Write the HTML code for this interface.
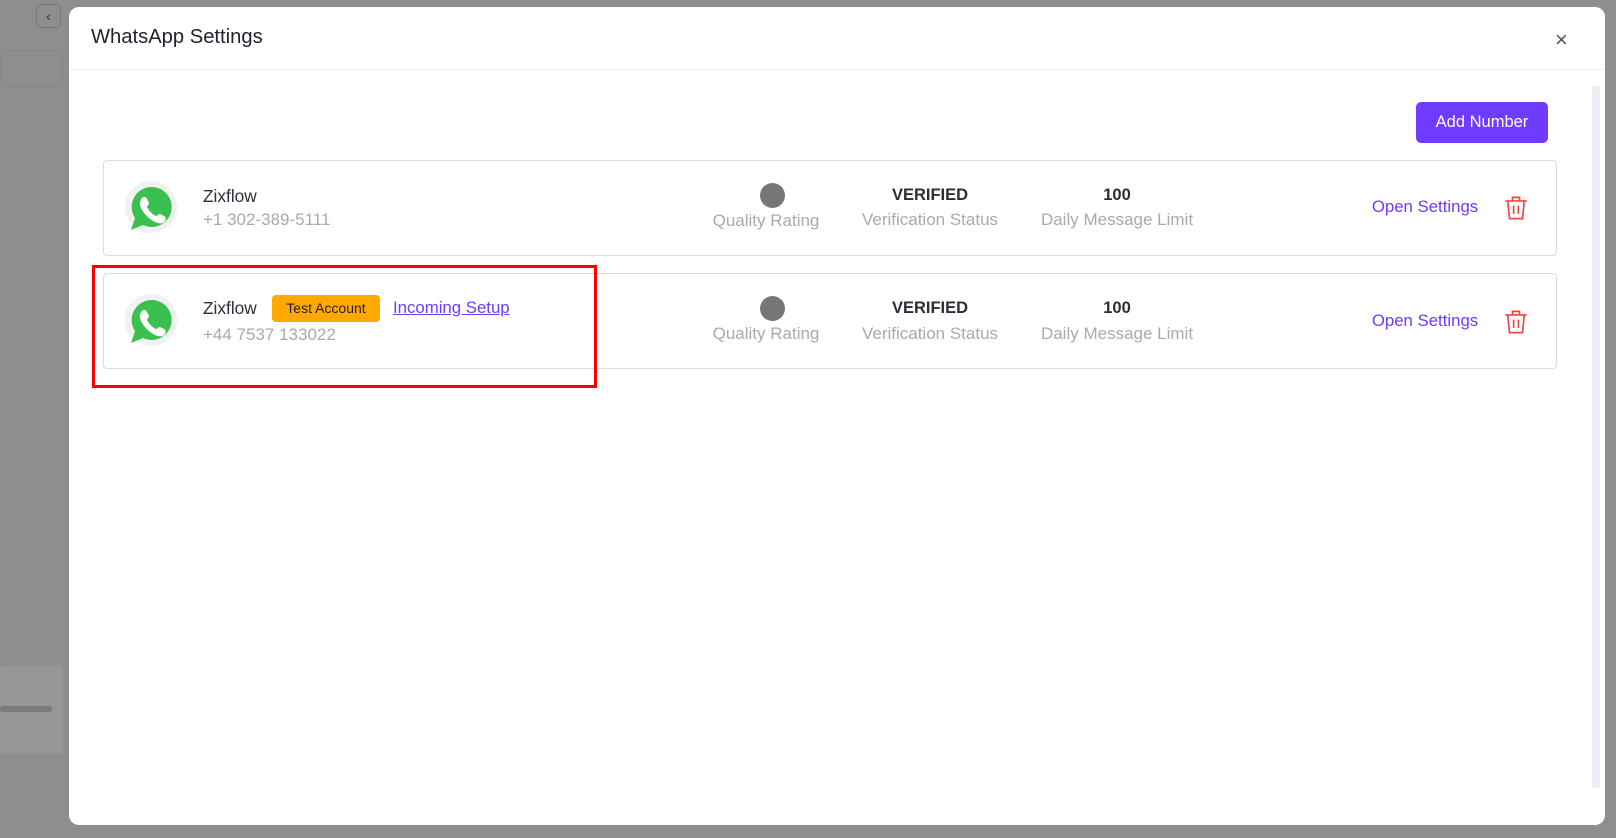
<!DOCTYPE html>
<html><head><style>
*{box-sizing:border-box;margin:0;padding:0}
body{width:1616px;height:838px;background:#8e8e8e;font-family:"Liberation Sans",sans-serif;position:relative;overflow:hidden}
.abs{position:absolute}
.modal{left:69px;top:7px;width:1536px;height:818px;background:#fff;border-radius:10px}
.card{left:103px;width:1454px;height:96px;border:1px solid #d9dbe3;border-radius:4px;background:#fff}
.name{font-size:17.3px;color:#2d2d3a}
.sub{font-size:17px;color:#a7a9b5}
.c{text-align:center;transform:translateX(-50%)}
.bold{font-size:16.5px;color:#2d2d3a;font-weight:bold}
.link{color:#6d3bff;font-size:16.8px}
</style></head><body>
<div class="abs" style="left:36px;top:4px;width:25px;height:24px;border:1px solid #777;border-radius:5px;background:#8e8e8e;color:#333;font-size:14px;text-align:center;line-height:22px">&#8249;</div>
<div class="abs" style="left:0;top:50px;width:63px;height:37px;border:1px solid #858585;border-radius:4px"></div>
<div class="abs" style="left:0;top:666px;width:63px;height:88px;background:#969696;border-radius:4px"></div>
<div class="abs" style="left:0;top:706px;width:52px;height:6px;background:#7a7a7a;border-radius:3px"></div>
<div class="abs modal"></div>
<div class="abs" style="left:91px;top:26px;font-size:20.2px;color:#22222e">WhatsApp Settings</div>
<div class="abs" style="left:69px;top:69px;width:1536px;height:1px;background:#eceef2"></div>
<div class="abs" style="left:1555px;top:27px;font-size:22px;color:#555">&#215;</div>
<div class="abs" style="left:1592px;top:86px;width:8px;height:702px;background:#eceff3"></div>
<div class="abs" style="left:1416px;top:102px;width:132px;height:41px;background:#6f3bff;border-radius:5px;color:#fff;font-size:16.5px;text-align:center;line-height:41px">Add Number</div>

<div class="abs card" style="top:160px"></div>
<div class="abs card" style="top:273px"></div>
<div class="abs" style="left:92px;top:265px;width:505px;height:123px;border:3px solid #f00"></div>

<svg class="abs" style="left:123px;top:180px" width="56" height="56" viewBox="0 0 56 56"><circle cx="28" cy="27" r="26" fill="#f1f1f1"/><path d="M8 50 L12 38 A20 20 0 1 1 20 45 Z" fill="#3ac04f"/><path d="M19 18c2-2 4-1 5 1l2 4c0 2-2 3-2 4 2 4 5 7 9 9 1 0 2-2 4-2l4 2c2 1 2 3 1 5-2 3-6 3-10 1-6-3-11-8-14-14-2-4-1-8 1-10z" fill="#fff"/></svg>
<svg class="abs" style="left:123px;top:293px" width="56" height="56" viewBox="0 0 56 56"><circle cx="28" cy="27" r="26" fill="#f1f1f1"/><path d="M8 50 L12 38 A20 20 0 1 1 20 45 Z" fill="#3ac04f"/><path d="M19 18c2-2 4-1 5 1l2 4c0 2-2 3-2 4 2 4 5 7 9 9 1 0 2-2 4-2l4 2c2 1 2 3 1 5-2 3-6 3-10 1-6-3-11-8-14-14-2-4-1-8 1-10z" fill="#fff"/></svg>

<div class="abs name" style="left:203px;top:186px">Zixflow</div>
<div class="abs sub" style="left:203px;top:210px">+1 302-389-5111</div>
<div class="abs name" style="left:203px;top:298px">Zixflow</div>
<div class="abs" style="left:272px;top:295px;width:108px;height:27px;background:#ffa800;border-radius:4px;font-size:14px;color:#222;text-align:center;line-height:27px">Test Account</div>
<div class="abs link" style="left:393px;top:298px;text-decoration:underline">Incoming Setup</div>
<div class="abs sub" style="left:203px;top:325px">+44 7537 133022</div>

<div class="abs" style="left:760px;top:183px;width:25px;height:25px;border-radius:50%;background:#777"></div>
<div class="abs" style="left:760px;top:296px;width:25px;height:25px;border-radius:50%;background:#777"></div>
<div class="abs sub c" style="left:766px;top:211px">Quality Rating</div>
<div class="abs sub c" style="left:766px;top:324px">Quality Rating</div>
<div class="abs bold c" style="left:930px;top:186px">VERIFIED</div>
<div class="abs sub c" style="left:930px;top:210px">Verification Status</div>
<div class="abs bold c" style="left:930px;top:299px">VERIFIED</div>
<div class="abs sub c" style="left:930px;top:324px">Verification Status</div>
<div class="abs bold c" style="left:1117px;top:186px">100</div>
<div class="abs sub c" style="left:1117px;top:210px">Daily Message Limit</div>
<div class="abs bold c" style="left:1117px;top:299px">100</div>
<div class="abs sub c" style="left:1117px;top:324px">Daily Message Limit</div>
<div class="abs link c" style="left:1425px;top:197px">Open Settings</div>
<div class="abs link c" style="left:1425px;top:311px">Open Settings</div>
<svg class="abs" style="left:1503px;top:195px" width="26" height="26" viewBox="0 0 22 22" fill="none" stroke="#f04444" stroke-width="1.4"><path d="M2 5h18M8 5V2h6v3M4 5l1.5 15h11L18 5M9 9v7M13 9v7"/></svg>
<svg class="abs" style="left:1503px;top:309px" width="26" height="26" viewBox="0 0 22 22" fill="none" stroke="#f04444" stroke-width="1.4"><path d="M2 5h18M8 5V2h6v3M4 5l1.5 15h11L18 5M9 9v7M13 9v7"/></svg>
</body></html>
